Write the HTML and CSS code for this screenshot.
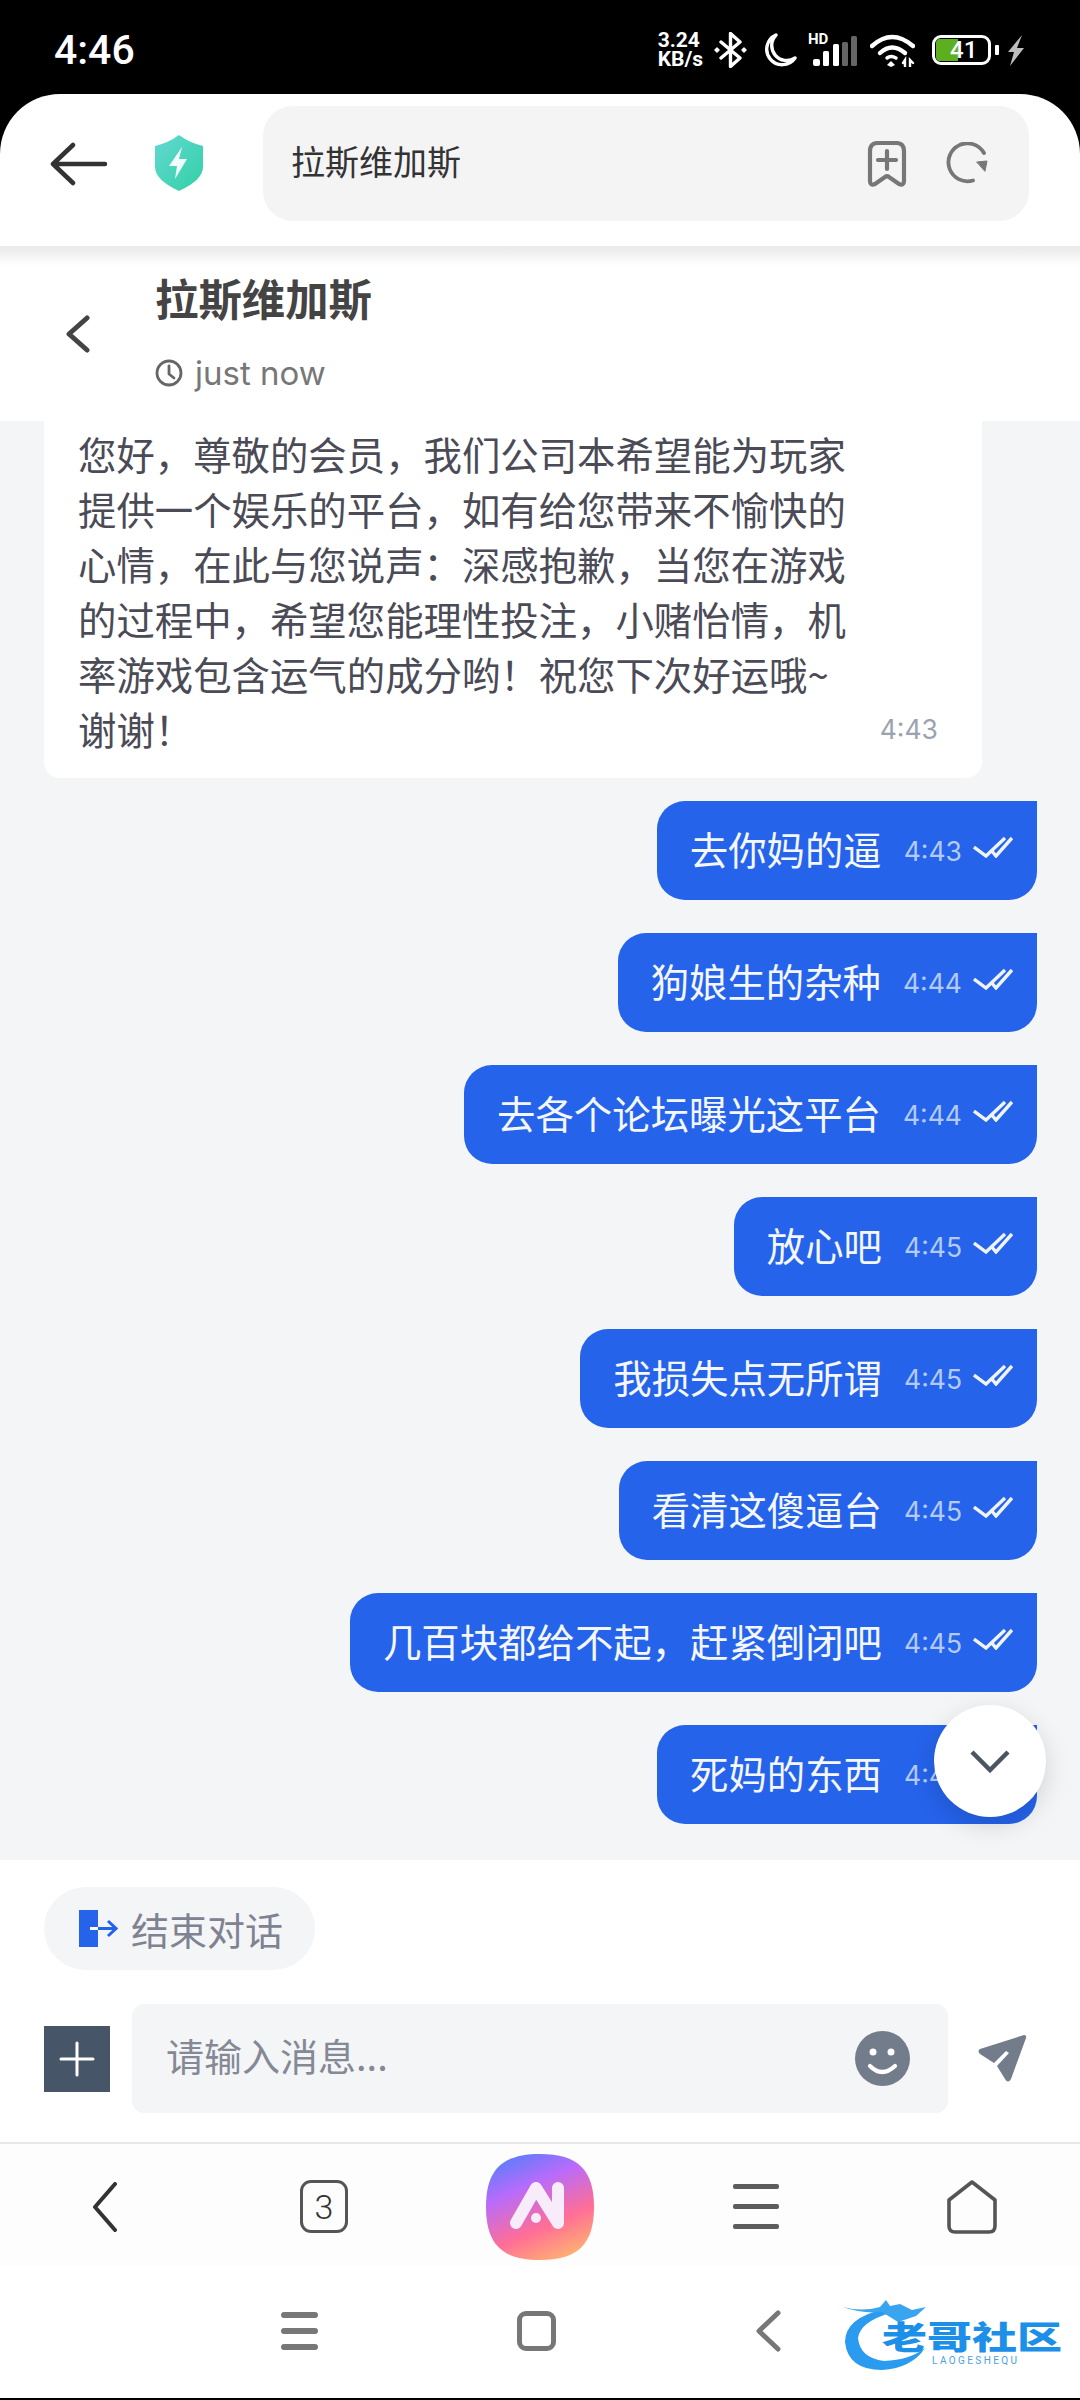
FILE: index.html
```html
<!DOCTYPE html>
<html lang="zh-CN">
<head>
    <meta charset="UTF-8">
    <meta name="viewport" content="width=device-width, initial-scale=1.0">
    <title>拉斯维加斯</title>
    <link rel="stylesheet" href="styles.css">
</head>
<body>
    <div class="status-bar">
        <span class="clock">4:46</span>
        <div class="status-icons">
            <div class="speed">3.24<br>KB/s</div>
            <svg class="ic-bt" width="35" height="36" viewBox="0 0 35 36" fill="none" stroke="#fff" stroke-width="3.4" stroke-linejoin="round" stroke-linecap="round">
                <path d="M8 10 L27 26 L17.5 34.5 V1.5 L27 10 L8 26"/>
                <path d="M2 18 L4 16 L6 18 L4 20 Z M29 18 L31 16 L33 18 L31 20 Z" fill="#fff" stroke-width="1.5"/>
            </svg>
            <svg class="ic-moon" width="34" height="34" viewBox="0 0 34 34" fill="none" stroke="#fff" stroke-width="3.4" stroke-linejoin="round">
                <path d="M13 2 A15.5 15.5 0 1 0 32 25 A15 15 0 0 1 13 2 Z"/>
            </svg>
            <div class="signal">
                <span class="hd">HD</span>
                <svg width="49" height="31" viewBox="0 0 49 31">
                    <rect x="5" y="23" width="7" height="7" rx="2" fill="#fff"/>
                    <rect x="15" y="15" width="6" height="15" rx="1.5" fill="#fff"/>
                    <rect x="25" y="8" width="6" height="22" rx="1.5" fill="#fff"/>
                    <rect x="34" y="6" width="6" height="24" rx="1.5" fill="#666"/>
                    <rect x="43" y="0" width="6" height="30" rx="1.5" fill="#666"/>
                </svg>
            </div>
            <svg class="ic-wifi" width="45" height="33" viewBox="0 0 45 33" fill="none" stroke="#fff" stroke-width="4.4" stroke-linecap="round">
                <path d="M2 12 Q22 -6 43 12"/>
                <path d="M10 19 Q22 8 35 19"/>
                <path d="M17 31 L21 27 L25 31 L21 33 Z" fill="#fff" stroke="none"/>
                <path d="M17 24 Q21 21 26 24" stroke-width="3.5"/>
                <path d="M33 29 L35 26 V33 M40 33 V26 L43 29" stroke-width="2.4"/>
            </svg>
            <div class="battery-wrap">
                <div class="battery">
                    <div class="battery-fill"></div>
                    <span class="battery-num">41</span>
                </div>
                <div class="battery-nub"></div>
            </div>
            <svg class="ic-bolt" width="18" height="31" viewBox="0 0 18 31">
                <path d="M15 0 L1 17 L7 17 L3 31 L17 13 L10 13 Z" fill="#bdbdbd"/>
            </svg>
        </div>
    </div>

    <header class="browser-bar">
        <svg class="bar-back" width="60" height="44" viewBox="0 0 60 44" fill="none" stroke="#333" stroke-width="4.5" stroke-linecap="round" stroke-linejoin="round">
            <path d="M55 22 H4 M23 3 L3 22 L23 41"/>
        </svg>
        <svg class="shield" width="50" height="57" viewBox="0 0 50 57">
            <defs>
                <linearGradient id="shieldFill" x1="0" y1="0" x2="1" y2="1">
                    <stop offset="0" stop-color="#62d9d2"/>
                    <stop offset="1" stop-color="#33d0a6"/>
                </linearGradient>
            </defs>
            <path d="M25 0 Q36 8 49 11 V32 Q49 45 25 56 Q1 45 1 32 V11 Q14 8 25 0 Z" fill="url(#shieldFill)"/>
            <path d="M28 12 L15 31 H23 L21 44 L33 24 H25 Z" fill="#f0fdfa"/>
        </svg>
        <div class="url-pill">
            <span class="url-text">拉斯维加斯</span>
            <svg class="ic-bookmark" width="40" height="46" viewBox="0 0 40 46" fill="none" stroke="#777" stroke-width="4.2" stroke-linejoin="round" stroke-linecap="round">
                <path d="M3 10 Q3 2 11 2 H29 Q37 2 37 10 V40 Q37 45 32 43 L22 36 Q20 34.5 18 36 L8 43 Q3 45 3 40 Z"/>
                <path d="M20 10 V28 M11 19 H29"/>
            </svg>
            <svg class="ic-refresh" width="44" height="44" viewBox="0 0 44 44" fill="none" stroke="#777" stroke-width="3.8" stroke-linecap="round">
                <path d="M38 11 A19 19 0 1 0 27 38.5"/>
                <path d="M31 20 L41 19 L39 29 Z" fill="#777" stroke-width="1"/>
            </svg>
        </div>
    </header>

    <div class="chat-head">
        <svg width="24" height="38" viewBox="0 0 24 38" fill="none" stroke="#444" stroke-width="5" stroke-linecap="round" stroke-linejoin="round">
            <path d="M21 3 L3 19 L21 35"/>
        </svg>
        <div class="chat-info">
            <h1 class="chat-title">拉斯维加斯</h1>
            <div class="chat-seen">
                <svg width="28" height="28" viewBox="0 0 28 28" fill="none" stroke="#666" stroke-width="2.8" stroke-linecap="round" stroke-linejoin="round">
                    <circle cx="14" cy="14" r="12"/>
                    <path d="M14 7 V15 L19 19"/>
                </svg>
                <span>just now</span>
            </div>
        </div>
    </div>

    <main class="messages">
        <div class="card">
            <p class="card-text">您好，尊敬的会员，我们公司本希望能为玩家<br>提供一个娱乐的平台，如有给您带来不愉快的<br>心情，在此与您说声：深感抱歉，当您在游戏<br>的过程中，希望您能理性投注，小赌怡情，机<br>率游戏包含运气的成分哟！祝您下次好运哦~<br>谢谢！</p>
            <span class="card-time">4:43</span>
        </div>

        <div class="bubble">
            <span class="bubble-text">去你妈的逼</span><span class="bubble-time">4:43</span>
            <svg class="ticks" width="40" height="22" viewBox="0 0 40 22" fill="none" stroke="#eef3fe" stroke-width="3.4"><path d="M1 11 L13 20 L32 2 M18 14 L23 20 L39 2"/></svg>
        </div>
        <div class="bubble">
            <span class="bubble-text">狗娘生的杂种</span><span class="bubble-time">4:44</span>
            <svg class="ticks" width="40" height="22" viewBox="0 0 40 22" fill="none" stroke="#eef3fe" stroke-width="3.4"><path d="M1 11 L13 20 L32 2 M18 14 L23 20 L39 2"/></svg>
        </div>
        <div class="bubble">
            <span class="bubble-text">去各个论坛曝光这平台</span><span class="bubble-time">4:44</span>
            <svg class="ticks" width="40" height="22" viewBox="0 0 40 22" fill="none" stroke="#eef3fe" stroke-width="3.4"><path d="M1 11 L13 20 L32 2 M18 14 L23 20 L39 2"/></svg>
        </div>
        <div class="bubble">
            <span class="bubble-text">放心吧</span><span class="bubble-time">4:45</span>
            <svg class="ticks" width="40" height="22" viewBox="0 0 40 22" fill="none" stroke="#eef3fe" stroke-width="3.4"><path d="M1 11 L13 20 L32 2 M18 14 L23 20 L39 2"/></svg>
        </div>
        <div class="bubble">
            <span class="bubble-text">我损失点无所谓</span><span class="bubble-time">4:45</span>
            <svg class="ticks" width="40" height="22" viewBox="0 0 40 22" fill="none" stroke="#eef3fe" stroke-width="3.4"><path d="M1 11 L13 20 L32 2 M18 14 L23 20 L39 2"/></svg>
        </div>
        <div class="bubble">
            <span class="bubble-text">看清这傻逼台</span><span class="bubble-time">4:45</span>
            <svg class="ticks" width="40" height="22" viewBox="0 0 40 22" fill="none" stroke="#eef3fe" stroke-width="3.4"><path d="M1 11 L13 20 L32 2 M18 14 L23 20 L39 2"/></svg>
        </div>
        <div class="bubble">
            <span class="bubble-text">几百块都给不起，赶紧倒闭吧</span><span class="bubble-time">4:45</span>
            <svg class="ticks" width="40" height="22" viewBox="0 0 40 22" fill="none" stroke="#eef3fe" stroke-width="3.4"><path d="M1 11 L13 20 L32 2 M18 14 L23 20 L39 2"/></svg>
        </div>
        <div class="bubble">
            <span class="bubble-text">死妈的东西</span><span class="bubble-time">4:45</span>
            <svg class="ticks" width="40" height="22" viewBox="0 0 40 22" fill="none" stroke="#eef3fe" stroke-width="3.4"><path d="M1 11 L13 20 L32 2 M18 14 L23 20 L39 2"/></svg>
        </div>

        <button class="scroll-down" type="button">
            <svg width="40" height="24" viewBox="0 0 40 24" fill="none" stroke="#4b5563" stroke-width="4.5"><path d="M2 3 L20 21 L38 3"/></svg>
        </button>
    </main>

    <section class="composer">
        <div class="end-chat">
            <svg width="39" height="37" viewBox="0 0 39 37">
                <rect x="0" y="0" width="19" height="37" fill="#2563eb"/>
                <path d="M11 18.5 H19" stroke="#fff" stroke-width="3"/>
                <path d="M19 18.5 H36 M29 11 L37 18.5 L29 26" fill="none" stroke="#2563eb" stroke-width="3"/>
            </svg>
            <span>结束对话</span>
        </div>
        <div class="input-row">
            <div class="plus-btn">
                <svg width="36" height="36" viewBox="0 0 36 36" stroke="#fff" stroke-width="3" stroke-linecap="round"><path d="M18 2 V34 M2 18 H34"/></svg>
            </div>
            <div class="input-box">
                <span class="placeholder">请输入消息...</span>
                <svg width="55" height="55" viewBox="0 0 55 55">
                    <circle cx="27.5" cy="27.5" r="27.5" fill="#737c8a"/>
                    <circle cx="18" cy="21" r="3.5" fill="#fff"/>
                    <circle cx="36" cy="21" r="3.5" fill="#fff"/>
                    <path d="M15 35 Q27 47 40 35" fill="none" stroke="#fff" stroke-width="4.2" stroke-linecap="round"/>
                </svg>
            </div>
            <svg class="send" width="49" height="49" viewBox="0 0 49 49">
                <path d="M46 1 Q49 1 48 4 L33 45 Q30 50 27 45 L19 32 L31 19 L28 17 L16 29 L2 20 Q-1 17 2 15 Z" fill="#737c8a"/>
            </svg>
        </div>
    </section>

    <nav class="browser-nav">
        <div class="nav-cell">
            <svg class="nav-back" width="28" height="50" viewBox="0 0 28 50" fill="none" stroke="#333" stroke-width="4" stroke-linecap="round" stroke-linejoin="round"><path d="M24 2 L4 25 L24 48"/></svg>
        </div>
        <div class="nav-cell"><div class="tabs">3</div></div>
        <div class="nav-cell">
            <svg width="108" height="106" viewBox="0 0 108 106">
                <defs>
                    <linearGradient id="appFill" x1="0.25" y1="0" x2="0.7" y2="1">
                        <stop offset="0" stop-color="#5d7dfb"/>
                        <stop offset="0.3" stop-color="#b86bfb"/>
                        <stop offset="0.68" stop-color="#ff6e96"/>
                        <stop offset="1" stop-color="#ffb072"/>
                    </linearGradient>
                </defs>
                <path d="M54 0 C92 0 108 16 108 53 C108 90 92 106 54 106 C16 106 0 90 0 53 C0 16 16 0 54 0 Z" fill="url(#appFill)"/>
                <g fill="none" stroke="#f8ecfb" stroke-width="12" stroke-linecap="round" stroke-linejoin="round">
                    <path d="M30 69 L50 34 L72 69 V34"/>
                </g>
                <circle cx="50" cy="64" r="5" fill="#f8ecfb"/>
            </svg>
        </div>
        <div class="nav-cell">
            <div class="bars">
                <i></i><i></i><i></i>
            </div>
        </div>
        <div class="nav-cell">
            <svg width="50" height="54" viewBox="0 0 50 54" fill="none" stroke="#555" stroke-width="3.6" stroke-linejoin="round"><path d="M25 2 L48 20 V46 Q48 52 42 52 H8 Q2 52 2 46 V20 Z"/></svg>
        </div>
    </nav>

    <div class="system-nav">
        <div class="sys-bars">
            <i></i><i></i><i></i>
        </div>
        <div class="sys-square"></div>
        <svg width="26" height="42" viewBox="0 0 26 42" fill="none" stroke="#777" stroke-width="5" stroke-linecap="round" stroke-linejoin="round"><path d="M23 3 L4 21 L23 39"/></svg>
        <div class="watermark">
            <svg class="dragon" width="100" height="75" viewBox="0 0 100 75" fill="none">
                <path d="M44 11 Q5 20 5 44 Q8 72 42 72 Q72 70 85 50 Q70 62 44 63 Q20 60 18 40 Q20 24 50 15 Z" fill="#2a9bee"/>
                <path d="M3 9 Q22 14 40 9 L46 2 L50 8 L60 6 L72 12 L86 9 L76 18 L58 24 L42 14 Q22 16 3 9 Z" fill="#3aa5ef"/>
            </svg>
            <span class="wm-title">老哥社区</span>
            <span class="wm-sub">LAOGESHEQU</span>
        </div>
    </div>
</body>
</html>
```

FILE: styles.css
```css
* {
    box-sizing: border-box;
}

body {
    margin: 0;
    width: 1080px;
    height: 2400px;
    overflow: hidden;
    background-color: #000;
    font-family: "Noto Sans CJK SC", Roboto, sans-serif;
}

.status-bar {
    height: 94px;
    padding: 6px 55px 0 54px;
    display: flex;
    justify-content: space-between;
    align-items: center;
    color: #fff;
    font-family: Roboto, sans-serif;
}

.clock {
    font-size: 41px;
    font-weight: 500;
}

.status-icons {
    display: flex;
    align-items: center;
}

.speed {
    font-size: 21px;
    font-weight: 700;
    line-height: 19px;
}

.ic-bt {
    margin-left: 10px;
}

.ic-moon {
    margin-left: 15px;
}

.signal {
    margin-left: 11px;
    position: relative;
    padding-top: 2px;
}

.signal svg {
    display: block;
}

.hd {
    position: absolute;
    left: 0;
    top: -4px;
    font-size: 15px;
    font-weight: 700;
}

.ic-wifi {
    margin-left: 13px;
}

.battery-wrap {
    margin-left: 17px;
    display: flex;
    align-items: center;
    gap: 4px;
}

.battery {
    position: relative;
    width: 59px;
    height: 30px;
    border: 3px solid #fff;
    border-radius: 9px;
}

.battery-fill {
    position: absolute;
    left: 1px;
    top: 1px;
    bottom: 1px;
    width: 22px;
    background-color: #5cb01f;
    border-radius: 4px 0 0 4px;
}

.battery-num {
    position: absolute;
    left: 15px;
    top: -1px;
    font-size: 24px;
    line-height: 26px;
    font-weight: 500;
}

.battery-nub {
    width: 4px;
    height: 10px;
    background-color: #fff;
    border-radius: 1px;
}

.ic-bolt {
    margin-left: 8px;
}

.browser-bar {
    height: 152px;
    padding: 12px 51px 25px 50px;
    display: flex;
    align-items: center;
    background-color: #fff;
    border-radius: 60px 60px 0 0;
}

.shield {
    margin-left: 44px;
}

.url-pill {
    margin-left: 59px;
    flex: 1;
    height: 115px;
    padding: 0 39px 0 28px;
    display: flex;
    align-items: center;
    background-color: #f4f4f5;
    border-radius: 30px;
}

.url-text {
    flex: 1;
    padding-bottom: 6px;
    font-size: 34px;
    color: #333;
}

.ic-refresh {
    margin-left: 39px;
}

.chat-head {
    height: 175px;
    padding: 0 0 0 66px;
    display: flex;
    align-items: center;
    gap: 65px;
    background: linear-gradient(#e9e9ea, #fff 20px);
}

.chat-info {
    padding-bottom: 6px;
}

.chat-title {
    margin: 0 0 28px;
    font-size: 43.4px;
    line-height: 56px;
    font-weight: 700;
    color: #444;
}

.chat-seen {
    display: flex;
    align-items: center;
    gap: 12px;
    font-family: Inter, sans-serif;
    font-size: 33px;
    line-height: 40px;
    color: #777;
}

.messages {
    position: relative;
    height: 1439px;
    padding: 0 43px 0 44px;
    display: flex;
    flex-direction: column;
    align-items: flex-end;
    gap: 33px;
    overflow: hidden;
    background-color: #f4f5f7;
}

.card {
    align-self: flex-start;
    width: 938px;
    margin-bottom: -10px;
    padding: 5px 44px 22px 34px;
    display: flex;
    justify-content: space-between;
    align-items: flex-end;
    background-color: #fff;
    border-radius: 0 0 16px 16px;
}

.card-text {
    margin: 0;
    font-size: 38.4px;
    line-height: 55px;
    color: #4b4b57;
    white-space: nowrap;
}

.card-time {
    margin-bottom: 10px;
    font-family: Inter, Roboto, sans-serif;
    font-size: 26.5px;
    line-height: 34px;
    color: #9aa3af;
}

.bubble {
    height: 99px;
    padding: 0 24px 0 33px;
    display: flex;
    align-items: center;
    background-color: #2563eb;
    border-radius: 28px 0 28px 28px;
}

.bubble-text {
    padding-bottom: 4px;
    font-size: 38.4px;
    line-height: 55px;
    color: #f4f7ff;
    white-space: nowrap;
}

.bubble-time {
    margin-left: 22px;
    font-family: Inter, Roboto, sans-serif;
    font-size: 26.5px;
    color: #b4cbfa;
}

.ticks {
    margin: -7px 0 0 11px;
}

.scroll-down {
    position: absolute;
    left: 934px;
    top: 1284px;
    width: 112px;
    height: 112px;
    padding: 0;
    display: flex;
    justify-content: center;
    align-items: center;
    border: none;
    border-radius: 50%;
    background-color: #fff;
    box-shadow: 0 8px 26px rgba(0, 0, 0, 0.14);
}

.composer {
    height: 284px;
    padding-top: 27px;
    background-color: #fff;
    border-bottom: 2px solid #e8e8e8;
}

.end-chat {
    margin-left: 44px;
    width: 271px;
    height: 83px;
    padding-left: 35px;
    display: flex;
    align-items: center;
    gap: 13px;
    background-color: #f4f5f7;
    border-radius: 42px;
    font-size: 38px;
    color: #7f8291;
}

.input-row {
    margin-top: 34px;
    padding: 0 53px 0 44px;
    display: flex;
    align-items: center;
}

.plus-btn {
    width: 66px;
    height: 66px;
    display: flex;
    justify-content: center;
    align-items: center;
    background-color: #475569;
}

.input-box {
    margin: 0 30px 0 22px;
    flex: 1;
    height: 109px;
    padding: 0 38px 0 34px;
    display: flex;
    justify-content: space-between;
    align-items: center;
    background-color: #f4f5f7;
    border-radius: 12px;
    font-size: 38px;
    color: #858995;
}

.placeholder {
    padding-bottom: 8px;
}

.browser-nav {
    height: 122px;
    padding-top: 3px;
    display: grid;
    grid-template-columns: repeat(5, 1fr);
    background-color: #fdfdfd;
}

.nav-cell {
    display: flex;
    justify-content: center;
    align-items: center;
}

.nav-back {
    margin-right: 6px;
}

.tabs {
    width: 48px;
    height: 53px;
    display: flex;
    justify-content: center;
    align-items: center;
    border: 3.5px solid #555;
    border-radius: 11px;
    font-family: Roboto, sans-serif;
    font-size: 34px;
    font-weight: 300;
    color: #333;
}

.bars {
    display: flex;
    flex-direction: column;
    gap: 15px;
}

.bars i {
    display: block;
    width: 46px;
    height: 5px;
    border-radius: 2px;
    background-color: #5c5c5c;
}

.system-nav {
    position: relative;
    height: 132px;
    padding: 0 0 2px 281px;
    display: flex;
    align-items: center;
    gap: 199px;
    background-color: #fff;
}

.sys-bars {
    display: flex;
    flex-direction: column;
    gap: 10px;
}

.sys-bars i {
    display: block;
    width: 37px;
    height: 6px;
    border-radius: 3px;
    background-color: #777;
}

.sys-square {
    width: 39px;
    height: 40px;
    border: 5px solid #777;
    border-radius: 9px;
}

.watermark {
    position: absolute;
    left: 840px;
    top: 32px;
    width: 225px;
    height: 75px;
}

.dragon {
    position: absolute;
    left: 0;
    top: 0;
}

.wm-title {
    position: absolute;
    left: 42px;
    top: 9px;
    font-size: 45px;
    line-height: 56px;
    font-weight: 900;
    color: #1c8fe8;
    white-space: nowrap;
    transform: scaleY(0.72);
}

.wm-sub {
    position: absolute;
    left: 92px;
    top: 58px;
    font-family: Roboto, sans-serif;
    font-size: 10px;
    line-height: 10px;
    letter-spacing: 2.4px;
    color: #4aa0e4;
    white-space: nowrap;
}
```
